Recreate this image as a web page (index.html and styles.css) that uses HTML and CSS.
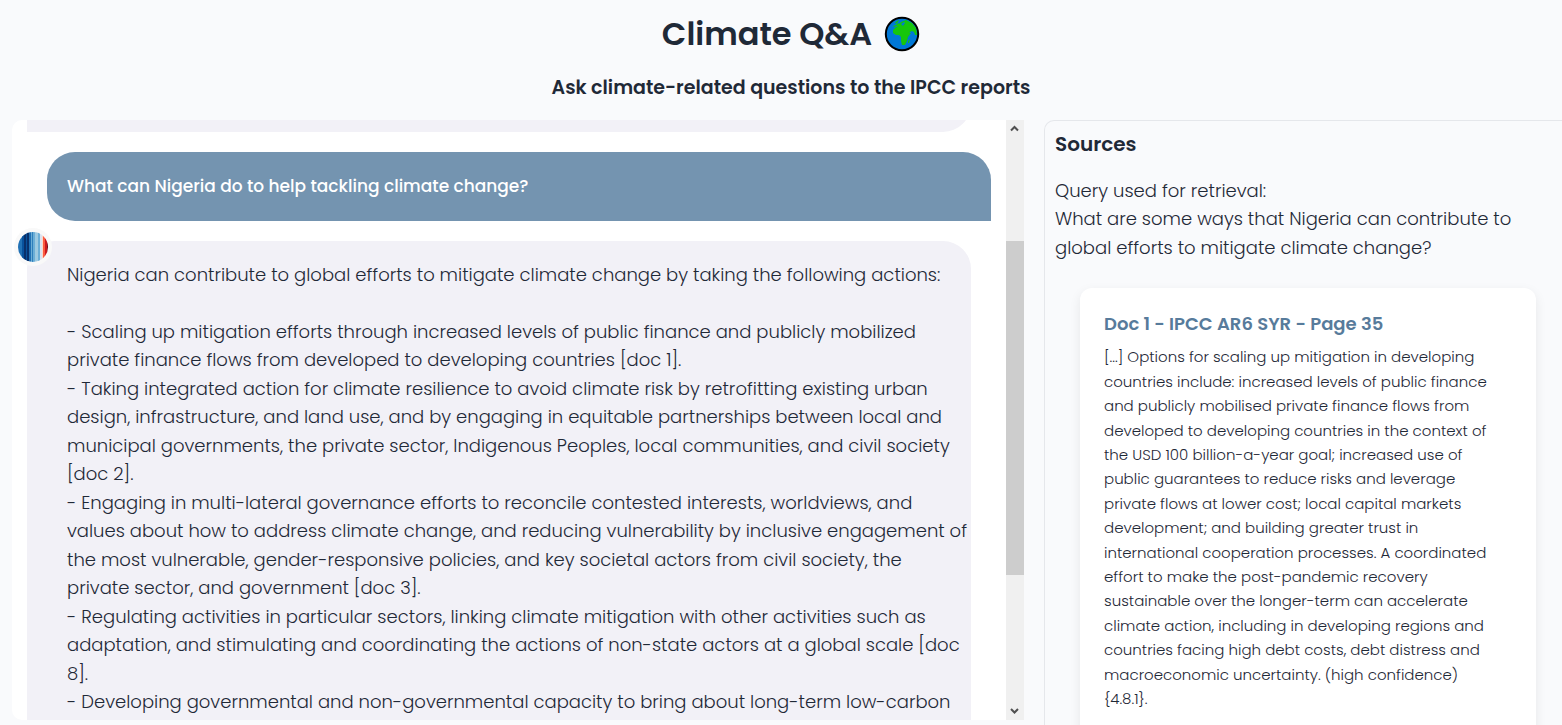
FILE: index.html
```html
<!DOCTYPE html>
<html lang="en">
<head>
<meta charset="utf-8">
<title>Climate Q&amp;A</title>
<link rel="stylesheet" href="styles.css">
</head>
<body>
<header class="header">
  <h1 class="title">Climate Q&amp;A
    <svg class="globe" viewBox="0 0 36 36" aria-hidden="true">
      <circle cx="18" cy="18" r="16.2" fill="#0078d7" stroke="#000" stroke-width="2"/>
      <path fill="#16c60c" d="M9 14l3-3 4-1 2 1 3 1 2 2 1 3 3 0-3 4-1 4-2 4h-3l-1-4v-4l-2-2h-3l-3-2zM12 9l2-2 1 1 2-2 5-2 6 3 4 5 1 7-2 0-1-3-2-1-2 1-1 2-2-2-3-3-2-1-1-1-2 1-2-2-3 1-1-1zM24 25l2-2-1 4h-1z"/>
      <path fill="#16c60c" d="M11 7l2-2 2-1-1 2-2 2z"/>
      <path fill="#0078d7" d="M17 8l3-2 1 1-2 3z"/>
    </svg>
  </h1>
  <h2 class="subtitle">Ask climate-related questions to the IPCC reports</h2>
</header>
<main class="columns">
  <section class="chat" aria-label="Conversation">
    <div class="messages">
      <div class="bubble bot previous"></div>
      <div class="bubble user">What can Nigeria do to help tackling climate change?</div>
      <div class="reply">
        <svg class="avatar" viewBox="0 0 38 38" aria-hidden="true">
          <defs><clipPath id="disc"><circle cx="19" cy="19" r="15"/></clipPath></defs>
          <circle cx="19" cy="19" r="19" fill="#f9f9f9"/>
          <g clip-path="url(#disc)">
            <path fill="#2171b5" d="M4 4h6v30H4z"/>
            <path fill="#08519c" d="M8 4h2v30H8zM12 4h2v30h-2z"/>
            <path fill="#08306b" d="M10 4h2v30h-2zM13 4h2v30h-2z"/>
            <path fill="#2171b5" d="M15 4h2v30h-2z"/>
            <path fill="#6baed6" d="M17 4h1v30h-1zM19 4h2v30h-2zM24 4h2v30h-2z"/>
            <path fill="#2f7fbc" d="M18 4h1v30h-1z"/>
            <path fill="#9ecae1" d="M21 4h3v30h-3z"/>
            <path fill="#dbe3f0" d="M26 4h2v30h-2z"/>
            <path fill="#fcd5c5" d="M28 4h1v30h-1z"/>
            <path fill="#fb5a40" d="M29 4h2v30h-2z"/>
            <path fill="#cb181d" d="M31 4h2v30h-2z"/>
            <path fill="#67000d" d="M33 4h1v30h-1z"/>
          </g>
        </svg>
        <div class="bubble bot">Nigeria can contribute to global efforts to mitigate climate change by taking the following actions:<br><br>
- Scaling up mitigation efforts through increased levels of public finance and publicly mobilized<br>
private finance flows from developed to developing countries [doc 1].<br>
- Taking integrated action for climate resilience to avoid climate risk by retrofitting existing urban<br>
design, infrastructure, and land use, and by engaging in equitable partnerships between local and<br>
municipal governments, the private sector, Indigenous Peoples, local communities, and civil society<br>
[doc 2].<br>
- Engaging in multi-lateral governance efforts to reconcile contested interests, worldviews, and<br>
values about how to address climate change, and reducing vulnerability by inclusive engagement of<br>
the most vulnerable, gender-responsive policies, and key societal actors from civil society, the<br>
private sector, and government [doc 3].<br>
- Regulating activities in particular sectors, linking climate mitigation with other activities such as<br>
adaptation, and stimulating and coordinating the actions of non-state actors at a global scale [doc<br>
8].<br>
- Developing governmental and non-governmental capacity to bring about long-term low-carbon</div>
      </div>
    </div>
    <div class="scrollbar" aria-hidden="true">
      <svg class="arrow" viewBox="0 0 18 16"><path d="M5 10.500L8.500 7l3.500 3.500" fill="none" stroke="#505050" stroke-width="2"/></svg>
      <div class="track"><div class="thumb"></div></div>
      <svg class="arrow" viewBox="0 0 18 16"><path d="M5 5L8.500 8.500L12 5" fill="none" stroke="#505050" stroke-width="2"/></svg>
    </div>
  </section>
  <aside class="sources">
    <h3 class="sources-title">Sources</h3>
    <p class="query">Query used for retrieval:<br>What are some ways that Nigeria can contribute to<br>global efforts to mitigate climate change?</p>
    <article class="card">
      <h4 class="card-title">Doc 1 - IPCC AR6 SYR - Page 35</h4>
      <p class="card-text">[...] Options for scaling up mitigation in developing<br>
countries include: increased levels of public finance<br>
and publicly mobilised private finance flows from<br>
developed to developing countries in the context of<br>
the USD 100 billion-a-year goal; increased use of<br>
public guarantees to reduce risks and leverage<br>
private flows at lower cost; local capital markets<br>
development; and building greater trust in<br>
international cooperation processes. A coordinated<br>
effort to make the post-pandemic recovery<br>
sustainable over the longer-term can accelerate<br>
climate action, including in developing regions and<br>
countries facing high debt costs, debt distress and<br>
macroeconomic uncertainty. (high confidence)<br>
{4.8.1}.</p>
    </article>
  </aside>
</main>
</body>
</html>
```
FILE: styles.css
```css
* { box-sizing: border-box; }
body {
  margin: 0;
  height: 100vh;
  overflow: hidden;
  display: flex;
  flex-direction: column;
  background: #f9fafc;
  color: #1f2937;
  font-family: Poppins, Inter, "Noto Sans", sans-serif;
  font-size: 18px;
  font-weight: 300;
  line-height: 1.583;
}
h1, h2, h3, h4, p { margin: 0; }
.header {
  flex: none;
  height: 120px;
  padding-left: 20px;
  display: flex;
  flex-direction: column;
  align-items: center;
}
.title {
  display: flex;
  align-items: center;
  gap: 12px;
  height: 68px;
  font-size: 32px;
  font-weight: 600;
}
.globe { width: 36px; height: 36px; }
.subtitle {
  font-size: 19px;
  font-weight: 600;
  line-height: 40px;
}
.columns {
  flex: 1;
  min-height: 0;
  display: grid;
  grid-template-columns: 1012fr 530fr;
  grid-template-rows: minmax(0, 1fr);
  gap: 20px;
  padding-left: 12px;
  margin-right: -12px;
}
.chat {
  display: flex;
  margin-bottom: 5px;
  overflow: hidden;
  background: #fff;
  border-radius: 10px 0 0 10px;
}
.messages {
  flex: 1;
  min-width: 0;
  padding: 0 15px;
  display: flex;
  flex-direction: column;
  gap: 20px;
  overflow: hidden;
}
.bubble {
  flex: none;
  padding: 20px;
  border-radius: 28px;
  white-space: nowrap;
}
.bot {
  margin-right: 20px;
  background: #f2f1f7;
  border-bottom-left-radius: 0;
}
.previous {
  height: 60px;
  margin-top: -48px;
}
.user {
  margin-left: 20px;
  background: #7494b0;
  color: #fff;
  font-size: 17px;
  font-weight: 500;
  line-height: 29px;
  border-bottom-right-radius: 0;
}
.reply { position: relative; }
.reply .bot {
  padding-left: 40px;
  padding-bottom: 60px;
}
.avatar {
  position: absolute;
  left: -13px;
  top: -13px;
  width: 38px;
  height: 38px;
}
.scrollbar {
  width: 18px;
  display: flex;
  flex-direction: column;
  background: #f0f0f0;
}
.arrow { width: 18px; height: 16px; }
.track {
  flex: 1;
  padding-top: 105px;
}
.thumb {
  height: 334px;
  background: #cdcdcd;
}
.sources {
  margin-right: -12px;
  padding: 8px 10px;
  border: 1px solid #e5e7eb;
  border-bottom: 0;
  border-radius: 10px 0 0 0;
  white-space: nowrap;
}
.sources-title {
  font-size: 20px;
  font-weight: 600;
  line-height: 30px;
  margin-bottom: 18px;
}
.card {
  margin: 26px 39px 0 25px;
  padding: 22px 24px 40px;
  background: #fff;
  border-radius: 12px;
  box-shadow: 0 4px 12px rgba(0, 0, 0, 0.08);
}
.card-title {
  color: #577b9b;
  font-size: 18px;
  font-weight: 600;
  line-height: 28px;
  margin-bottom: 7px;
}
.card-text {
  font-size: 15px;
  line-height: 1.627;
}
```
